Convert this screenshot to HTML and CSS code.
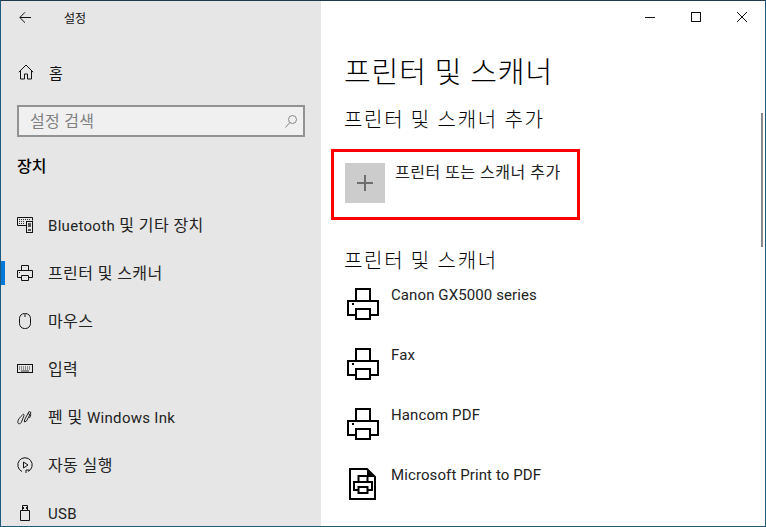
FILE: index.html
```html
<!DOCTYPE html>
<html lang="ko">
<head>
<meta charset="utf-8">
<title>설정</title>
<link rel="stylesheet" href="styles.css">
</head>
<body>
<svg class="defs" width="0" height="0" aria-hidden="true">
  <defs>
    <symbol id="printer-lg" viewBox="0 0 32 32">
      <path d="M9 12V1h14v11M9 31V21h14v10H9ZM8 27H1V13h30v14h-7" fill="none" stroke="#000" stroke-width="2"/>
      <rect x="5" y="15" width="2" height="2" fill="#000"/>
    </symbol>
  </defs>
</svg>
<div class="window">
  <aside class="sidebar">
    <div class="titlebar">
      <svg class="back" width="12" height="11" viewBox="0 0 12 11"><path d="M6 .3.8 5.500 6 10.700M1 5.500h11" fill="none" stroke="#111" stroke-width="1"/></svg>
      <span class="app-title">설정</span>
    </div>
    <div class="home">
      <svg class="nav-icon" width="16" height="16" viewBox="0 0 16 16"><path d="M.8 8.200 8 1l7.200 7.200M2.500 7v8h4V10h3v5h4V7" fill="none" stroke="#111" stroke-width="1"/></svg>
      <span>홈</span>
    </div>
    <div class="search">
      <span class="search-text">설정 검색</span>
      <svg width="12" height="13" viewBox="0 0 12 13"><circle cx="7.500" cy="4.500" r="4" fill="none" stroke="#888"/><path d="M4.700 7.700.5 12.500" stroke="#888" fill="none"/></svg>
    </div>
    <h2 class="group">장치</h2>
    <nav class="nav">
      <div class="nav-item">
        <svg class="nav-icon" width="16" height="16" viewBox="0 0 16 16"><path d="M9.500 8.500H.5V.5h15v3" fill="none" stroke="#111"/><path d="M2 2.500h11M2 4.500h6M2 6.500h6" stroke="#333" stroke-dasharray="1 1" fill="none"/><rect x="9.500" y="4.500" width="6" height="11" fill="#e6e6e6" stroke="#111"/><rect x="11" y="6" width="3" height="4" fill="#555"/><rect x="11" y="12" width="3" height="2" fill="#555"/></svg>
        <span class="nav-label"><span class="lat">Bluetooth</span> 및 기타 장치</span>
      </div>
      <div class="nav-item active">
        <svg class="nav-icon" width="16" height="16" viewBox="0 0 16 16"><path d="M4.500 5.500V.5h7v5M4.500 15.500v-5h7v5h-7ZM4.500 12.500H.5v-7h15v7h-4" fill="none" stroke="#111"/><rect x="2" y="7" width="1" height="1" fill="#111"/></svg>
        <span class="nav-label">프린터 및 스캐너</span>
      </div>
      <div class="nav-item">
        <svg class="nav-icon" width="16" height="16" viewBox="0 0 16 16"><rect x="2.500" y=".5" width="11" height="15" rx="5" fill="none" stroke="#111"/><path d="M8 1v3" stroke="#111"/></svg>
        <span class="nav-label">마우스</span>
      </div>
      <div class="nav-item">
        <svg class="nav-icon" width="16" height="16" viewBox="0 0 16 16"><rect x=".5" y="3.500" width="15" height="8" fill="none" stroke="#111"/><path d="M2 6h12M2 8h12" stroke="#333" stroke-dasharray="1 1"/><path d="M4 10h8" stroke="#333"/></svg>
        <span class="nav-label">입력</span>
      </div>
      <div class="nav-item">
        <svg class="nav-icon" width="16" height="16" viewBox="0 0 16 16"><path d="M7.500 11 12 2.500l2 1-4.500 8.500-2 1ZM11 4.500l2.500 1.500M14 5.500 12.500 9M5.500 6C3 8 .5 11 .8 13.500c.3 2 3 1.500 3.700-.5L7 6.500C7.500 5 6 5 5.500 6Z" fill="none" stroke="#222" stroke-width="1"/></svg>
        <span class="nav-label">펜 및 <span class="lat">Windows Ink</span></span>
      </div>
      <div class="nav-item">
        <svg class="nav-icon" width="16" height="16" viewBox="0 0 16 16"><path d="M5 14.500A7.200 7.200 0 1 1 11 14.500M9 16v-3h3.500" fill="none" stroke="#111"/><path d="M6.500 5v6L11 8Z" fill="none" stroke="#111"/></svg>
        <span class="nav-label">자동 실행</span>
      </div>
      <div class="nav-item">
        <svg class="nav-icon" width="16" height="16" viewBox="0 0 16 16"><path d="M3.500 5.500h9v10h-9ZM5.500 5.500v-5h5v5" fill="none" stroke="#111"/><rect x="6" y="2" width="1" height="2" fill="#111"/><rect x="9" y="2" width="1" height="2" fill="#111"/></svg>
        <span class="lat">USB</span>
      </div>
    </nav>
  </aside>
  <main class="main">
    <div class="controls">
      <svg width="10" height="10" viewBox="0 0 10 10"><path d="M0 5.500h10" stroke="#111"/></svg>
      <svg width="10" height="10" viewBox="0 0 10 10"><rect x=".5" y=".5" width="9" height="9" fill="none" stroke="#111"/></svg>
      <svg width="10" height="10" viewBox="0 0 10 10"><path d="M0 0l10 10M10 0 0 10" stroke="#111"/></svg>
    </div>
    <h1 class="page-title">프린터 및 스캐너</h1>
    <h2 class="section">프린터 및 스캐너 추가</h2>
    <div class="add-box">
      <div class="plus">
        <svg width="16" height="16" viewBox="0 0 16 16"><path d="M8 0v16M0 8h16" stroke="#6e6e6e" stroke-width="2"/></svg>
      </div>
      <span class="add-label">프린터 또는 스캐너 추가</span>
    </div>
    <h2 class="section list-head">프린터 및 스캐너</h2>
    <div class="printers">
      <div class="printer"><svg width="32" height="32"><use href="#printer-lg"/></svg><span>Canon GX5000 series</span></div>
      <div class="printer"><svg width="32" height="32"><use href="#printer-lg"/></svg><span>Fax</span></div>
      <div class="printer"><svg width="32" height="32"><use href="#printer-lg"/></svg><span>Hancom PDF</span></div>
      <div class="printer"><svg width="32" height="32" viewBox="0 0 32 32"><path d="M3 1h17l8 8v22H3Z" fill="none" stroke="#000" stroke-width="2"/><path d="M20 2l7 7h-7Z" fill="#000"/><path d="M11.500 14V8h9v6M11.500 25v-6h9v6h-9ZM11 22H7V14h18v8h-4" fill="none" stroke="#000" stroke-width="2"/></svg><span>Microsoft Print to PDF</span></div>
    </div>
    <div class="scrollbar"></div>
  </main>
</div>
</body>
</html>
```
FILE: styles.css
```css
* { box-sizing: border-box; }
html, body { margin: 0; height: 100%; overflow: hidden; }
body {
  font-family: Roboto, "Noto Sans CJK KR", sans-serif;
  color: #111;
  background: #1d5f86;
}
.defs { position: absolute; }
h1, h2 { margin: 0; font-weight: 400; }
.window {
  display: flex;
  width: 766px;
  height: 527px;
  overflow: hidden;
  border: 1px solid #1d5a7e;
  border-top-color: #1f3a4d;
}
.sidebar {
  width: 320px;
  flex: none;
  background: #e6e6e6;
  overflow: hidden;
}
.titlebar {
  display: flex;
  align-items: center;
  height: 32px;
  padding-left: 18px;
}
.app-title { margin-left: 33px; font-size: 12px; }
.home {
  display: flex;
  align-items: center;
  height: 48px;
  margin-top: 15px;
  padding-left: 17px;
  font-size: 15px;
}
.home .nav-icon { margin-right: 15px; flex: none; }
.search {
  display: flex;
  align-items: center;
  justify-content: space-between;
  width: 288px;
  height: 32px;
  margin: 9px 0 0 16px;
  padding: 0 6px 0 11px;
  border: 2px solid #929292;
  background: #f0f0f0;
  color: #808080;
  font-size: 16px;
  letter-spacing: .3px;
}
.search-text { margin-top: -3px; }
.group {
  margin: 18px 0 0 16px;
  font-size: 16px;
  font-weight: 500;
  line-height: 24px;
  color: #000;
}
.nav { margin-top: 22px; }
.nav-item {
  position: relative;
  display: flex;
  align-items: center;
  height: 48px;
  padding-left: 16px;
  font-size: 16px;
  letter-spacing: .4px;
  color: #222;
}
.nav-item .nav-icon { margin-right: 15px; flex: none; }
.nav-label { margin-top: -2px; }
.lat { font-size: 15px; letter-spacing: .3px; }
.nav-item > .lat { margin-top: 1px; }
.nav-item.active::before {
  content: "";
  position: absolute;
  left: 0;
  top: 12px;
  width: 4px;
  height: 24px;
  background: #0078d7;
}
.main {
  position: relative;
  flex: 1;
  background: #fff;
  padding-left: 23px;
  overflow: hidden;
}
.controls {
  display: flex;
  justify-content: flex-end;
  align-items: center;
  gap: 36px;
  height: 32px;
  padding-right: 18px;
}
.page-title {
  margin-top: 18px;
  font-size: 29px;
  font-weight: 300;
  line-height: 44px;
  color: #000;
  letter-spacing: .9px;
}
.section {
  font-size: 20px;
  font-weight: 300;
  line-height: 30px;
  letter-spacing: 1.7px;
  color: #000;
}
.page-title + .section { margin-top: 10px; }
.add-box {
  display: flex;
  align-items: flex-start;
  width: 249px;
  height: 71px;
  margin: 14px 0 0 -13px;
  padding: 11px 0 0 11px;
  border: 3px solid #f00;
}
.plus {
  display: flex;
  align-items: center;
  justify-content: center;
  width: 40px;
  height: 40px;
  background: #ccc;
}
.add-label { margin-left: 10px; font-size: 16px; letter-spacing: .5px; line-height: 20px; color: #222; }
.list-head { margin-top: 26px; }
.printers { margin-top: 8px; margin-left: 3px; }
.printer {
  display: flex;
  align-items: flex-start;
  height: 60px;
  padding-top: 4px;
}
.printer span { margin: -3px 0 0 12px; font-size: 15px; letter-spacing: .1px; line-height: 20px; color: #222; }
.scrollbar {
  position: absolute;
  right: 2px;
  top: 112px;
  width: 2px;
  height: 134px;
  background: #8a8a8a;
}
```
